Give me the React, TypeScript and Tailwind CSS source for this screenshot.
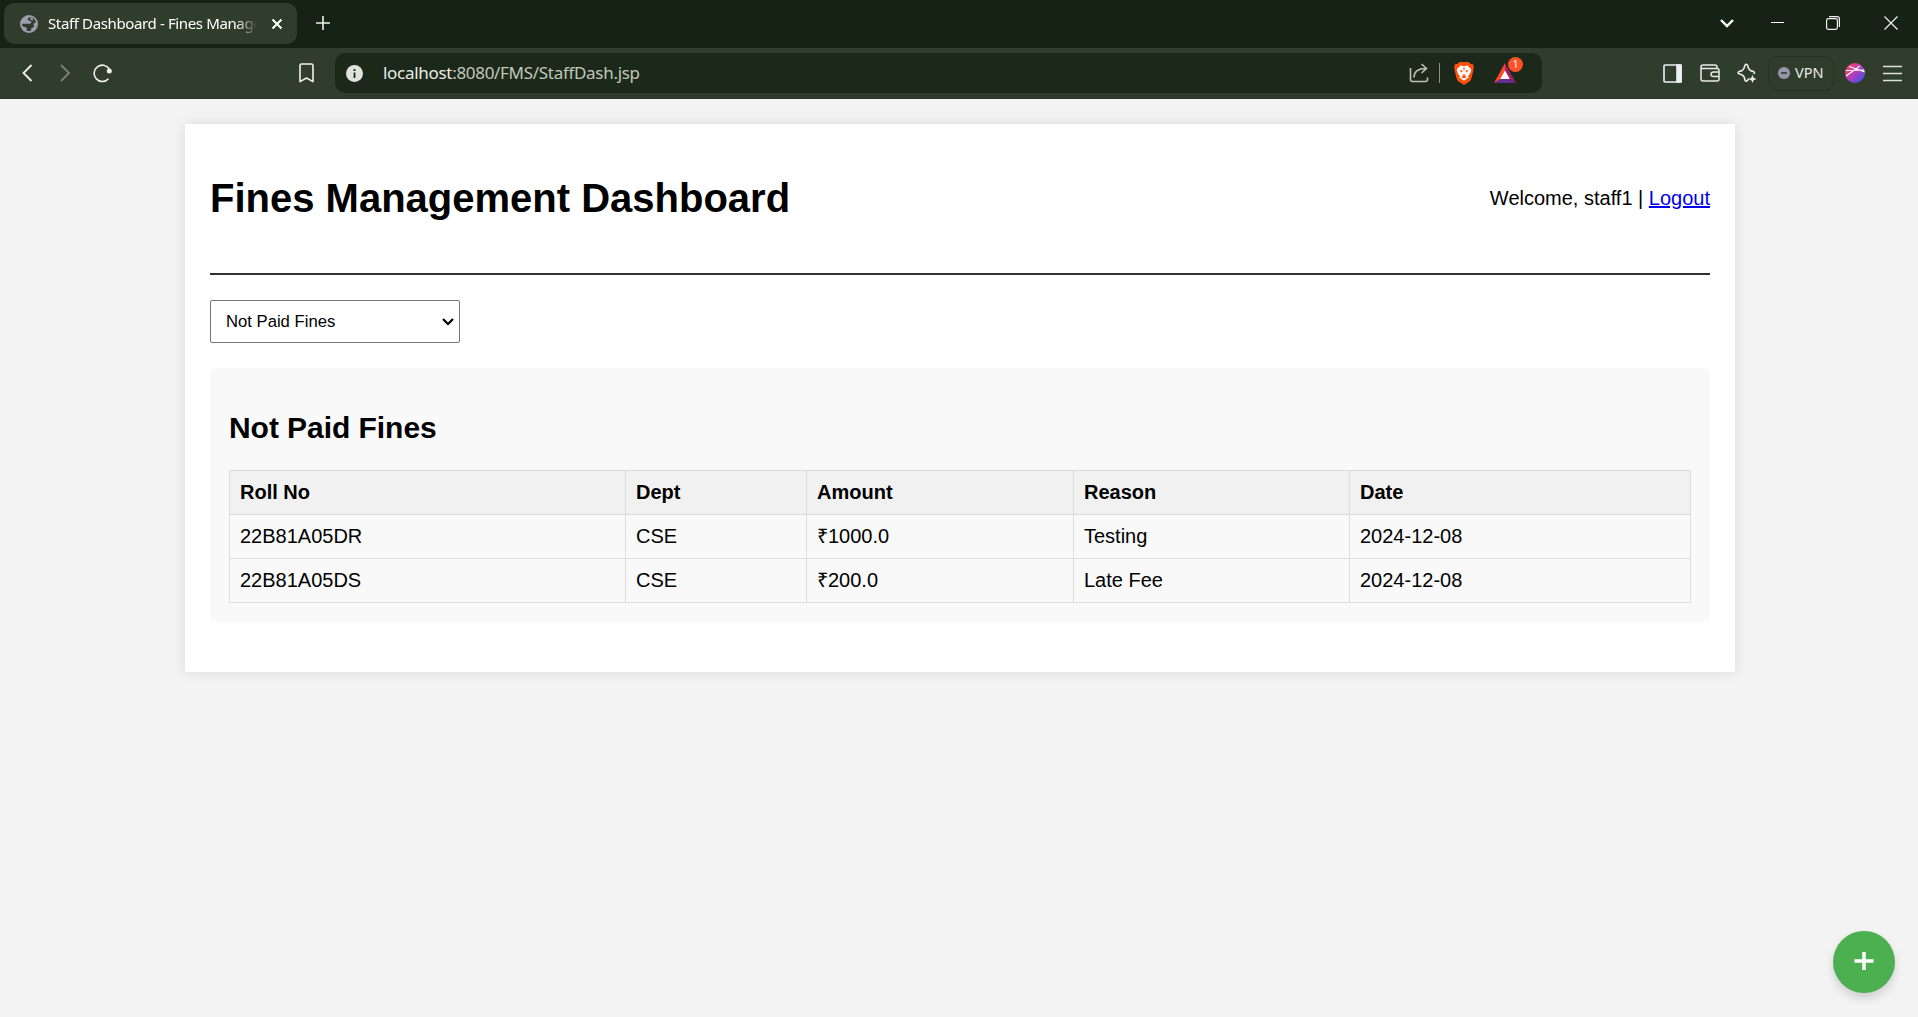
import React from "react";

const fines = [
  { roll: "22B81A05DR", dept: "CSE", amount: "₹1000.0", reason: "Testing", date: "2024-12-08" },
  { roll: "22B81A05DS", dept: "CSE", amount: "₹200.0", reason: "Late Fee", date: "2024-12-08" },
];

function TabStrip() {
  return (
    <div className="flex h-12 items-center bg-[#162213] pl-1 text-white">
      <div className="mt-[-1px] flex h-[41px] w-[293px] items-center rounded-[10px] bg-[#303d2d] pl-4">
        <svg className="size-[18px] shrink-0" viewBox="0 0 18 18">
          <circle cx="9" cy="9" r="9" fill="#9a9fad" />
          <path d="M11.500 2.200Q8 2 7.600 4.200Q7.600 5.600 9.600 5.800Q11.600 6 11.200 7.800Q11 9 9 8.800H2Q2.200 12 4.800 12Q7 12 6.800 14L6.600 15.800Q9 16.500 11 15.500Q10.600 13 12.600 12.600Q15 12.200 13.600 10Q13 8 16 7.500Q15 3.500 11.500 2.200z" fill="#303d2d" />
          <path d="M10.500 2.600Q13.800 3 12.800 5.500Q11.200 5.800 10.500 4.500z" fill="#9a9fad" />
        </svg>
        <div className="ml-[10px] w-[209px] overflow-hidden whitespace-nowrap text-[15px] tracking-[-0.37px] [mask-image:linear-gradient(to_right,black_90%,transparent)]">
          Staff Dashboard - Fines Manage
        </div>
        <svg className="ml-[14px] size-[12px] shrink-0" viewBox="0 0 12 12" stroke="#fff" strokeWidth="2"><path d="M1.500 1.500l9 9M10.500 1.500l-9 9" /></svg>
      </div>
      <svg className="ml-[19px] mt-[-2px] size-[14px]" viewBox="0 0 14 14" stroke="#f0f2ef" strokeWidth="1.6"><path d="M7 0v14M0 7h14" /></svg>
      <svg className="ml-auto size-[14px]" viewBox="0 0 14 14" fill="none" stroke="#fff" strokeWidth="2.4"><path d="M1 3l6 6 6-6" /></svg>
      <svg className="ml-[37px] h-[14px] w-[13px]" viewBox="0 0 13 14" stroke="#fff"><path d="M0 5.500h13" /></svg>
      <svg className="ml-[42px] mt-[-2px] size-[14px]" viewBox="0 0 14 14" fill="none" stroke="#f0f2ef" strokeWidth="1.2"><rect x=".6" y="2.600" width="10.800" height="10.800" rx="1.800" /><path d="M3 .6h8a2.400 2.400 0 0 1 2.400 2.400v8" /></svg>
      <svg className="ml-[44px] mr-[20px] mt-[-2px] size-[14px]" viewBox="0 0 14 14" stroke="#f0f2ef" strokeWidth="1.2"><path d="M.5.5l13 13M13.500.5l-13 13" /></svg>
    </div>
  );
}

function BraveLion() {
  return (
    <svg className="ml-[14px] h-[23px] w-[20px]" viewBox="0 0 20 23">
      <path d="M5.500 0h9l2 2 2-.2L20 5l-.8 2 .3 1-2.300 9q-.5 1.800-2 2.800L10 23l-5.200-3.200q-1.500-1-2-2.800L.5 8l.3-1L0 5l1.500-3.200 2 .2z" fill="#fb4f0c" />
      <path d="M6.500 3.500l3.500.7 3.500-.7 3.800 4-1 3.500-2.300 3.200.6 1.300L10 18.800l-4.600-3.300.6-1.300L3.700 11l-1-3.500z" fill="#fff" />
      <path d="M5 7.800l3 .7.500 1.200-1 .8zM15 7.800l-3 .7-.5 1.200 1 .8zM9.200 5.500h1.600L10 10zM8 12.500h4l-1 1.200h-2zM7 14.800l3-1 3 1-3 1.800z" fill="#fb4f0c" />
    </svg>
  );
}

function Toolbar() {
  return (
    <div className="flex h-[51px] items-center border-b border-[#343235] bg-[#303d2d]">
      <svg className="ml-[22px] h-[18px] w-[11px]" viewBox="0 0 11 18" fill="none" stroke="#eef1ec" strokeWidth="1.8"><path d="M9.500 1L1.500 9l8 8" /></svg>
      <svg className="ml-[27px] h-[18px] w-[11px]" viewBox="0 0 11 18" fill="none" stroke="#788274" strokeWidth="1.8"><path d="M1 1l8 8-8 8" /></svg>
      <svg className="ml-[22px] mt-[-1px] size-[20px]" viewBox="0 0 20 20" fill="none" stroke="#eef1ec" strokeWidth="1.6"><path d="M15.500 15.700A8.200 8.200 0 1 1 16.300 6" /><circle cx="16.300" cy="8" r="2.500" fill="#eef1ec" stroke="none" /></svg>
      <svg className="ml-[186px] h-[20px] w-[15px]" viewBox="0 0 15 20" fill="none" stroke="#eef1ec" strokeWidth="1.6"><path d="M1 2.600Q1 1 2.600 1h9.800Q14 1 14 2.600V18.600L7.500 15 1 18.600z" strokeLinejoin="round" /></svg>
      <div className="ml-[21px] flex h-10 w-[1207px] items-center rounded-[10px] bg-[#1c291a]">
        <svg className="ml-[11px] size-[17px]" viewBox="0 0 17 17"><circle cx="8.500" cy="8.500" r="8.500" fill="#dfe3dc" /><path d="M8.500 4v2M8.500 7.500V13" stroke="#1c291a" strokeWidth="1.8" /></svg>
        <div className="ml-[20px] text-[17px] tracking-[-0.3px] text-[#c0c8bb]"><span className="text-[#e9ece6]">localhost</span>:8080/FMS/StaffDash.jsp</div>
        <svg className="ml-auto size-[20px]" viewBox="0 0 20 20" fill="none" stroke="#b9c1b5" strokeWidth="1.6"><path d="M1.500 5v11.500q0 2 2 2h13q2 0 2-2v-2" /><path d="M5 14.500c0-5.500 4-9 12-9M12.500 1l5 4.500-5 4.500" /></svg>
        <div className="ml-[10px] h-5 w-px bg-[#8a9486]" />
        <BraveLion />
        <div className="relative ml-[20px] mr-[26px] h-[20px] w-[22px]">
          <svg className="size-full" viewBox="0 0 22 20"><path d="M11 0L0 20l7-4 4-7z" fill="#ff4724" /><path d="M11 0l11 20-7-4-4-7z" fill="#9e1f63" /><path d="M0 20h22l-7-4H7z" fill="#662d91" /><path d="M11 7.500l4.800 8.500H6.200z" fill="#fff" /></svg>
          <div className="absolute -top-[6px] left-[14px] flex size-[15px] items-center justify-center rounded-full bg-[#ff5129] text-[10px] text-white">1</div>
        </div>
      </div>
      <svg className="ml-[121px] size-[19px]" viewBox="0 0 19 19" fill="none" stroke="#eceff3" strokeWidth="1.6"><rect x="1" y="1" width="17" height="17" rx="1" /><path d="M14 1h4v17h-4z" fill="#eceff3" /></svg>
      <svg className="ml-[18px] h-[18px] w-[20px]" viewBox="0 0 20 18" fill="none" stroke="#e8ebe5" strokeWidth="1.5"><path d="M17 4.500V3q0-2-2-2H3Q1 1 1 3v12q0 2 2 2h14q2 0 2-2V6.500q0-2-2-2H2Q1 4.200 1 3" /><path d="M19 8h-5.500q-2.500 0-2.500 2.300t2.500 2.300H19" /></svg>
      <svg className="ml-[17px] mt-[-1px] size-[20px]" viewBox="0 0 20 20" fill="none" stroke="#e8ebe5" strokeWidth="1.6">
        <path d="M12 15.500L10.500 17.500Q9.200 19 8 17.200Q7.500 13 5.500 12.200Q4.500 11.700 2 10.800Q0 9.700 2 8.600Q4.500 7.800 5.500 7.200Q7 6.200 8 2.200Q9.200.4 10.500 2.200Q11.500 6.200 13 7.200Q14 7.800 16.500 8.600Q18.500 9.700 16.500 10.800" />
        <path d="M15.500 12l1.200 2.800 2.800 1.200-2.800 1.200-1.200 2.800-1.200-2.800-2.800-1.200 2.800-1.200z" fill="#e8ebe5" stroke="none" />
      </svg>
      <div className="ml-[11px] flex h-[35px] w-[66px] items-center rounded-[10px] border border-[#283126] pl-[9px]">
        <svg className="size-[12px]" viewBox="0 0 12 12"><circle cx="6" cy="6" r="6" fill="#9297aa" /><path d="M3 6h6" stroke="#303d2d" strokeWidth="1.6" /></svg>
        <span className="ml-[5px] text-[14.5px] text-[#e8ebe5]">VPN</span>
      </div>
      <div className="ml-[11px] size-5 overflow-hidden rounded-full bg-[linear-gradient(135deg,#f4436a_15%,#b63bbd_50%,#3b57e0_90%)]">
        <svg viewBox="0 0 20 20" stroke="#fff" strokeWidth="1.2"><path d="M1 13L15 3M4 3.500l16 5.500M0 7.500l20-.5" /></svg>
      </div>
      <svg className="ml-[18px] mt-px h-[17px] w-[19px]" viewBox="0 0 19 17" stroke="#dde1da" strokeWidth="1.6"><path d="M0 1.500h19M0 8.500h19M0 15.500h19" /></svg>
    </div>
  );
}

export default function App() {
  return (
    <div className="relative flex h-[1017px] w-[1918px] flex-col overflow-hidden bg-[#f3f3f3] font-['Noto_Sans',sans-serif]">
      <TabStrip />
      <Toolbar />
      <main className="ml-[185px] mt-[25px] h-[548px] w-[1550px] bg-white p-[25px] font-['Liberation_Sans',Arial,sans-serif] text-[20px] leading-[23px] text-black shadow-[0_0_12.5px_rgba(0,0,0,0.1)]">
        <header className="flex h-[126px] items-center justify-between border-b-2 border-[#333] pb-[25px]">
          <h1 className="text-[40px] font-bold leading-[45px]">Fines Management Dashboard</h1>
          <div>Welcome, staff1 | <a href="#" className="text-[#0000ee] underline">Logout</a></div>
        </header>
        <div className="mt-[25px] flex h-[43px] w-[250px] items-center justify-between rounded-[2px] border border-[#767676] pl-[15px] pr-[5px] text-[16.67px]">
          <span>Not Paid Fines</span>
          <svg className="size-[12px]" viewBox="0 0 12 12" fill="none" stroke="#000" strokeWidth="2.2"><path d="M1 3l5 5 5-5" /></svg>
        </div>
        <section className="mt-[25px] h-[254px] rounded-[6px] bg-[#f9f9f9] px-[19px] pt-[42px]">
          <h2 className="text-[30px] font-bold leading-[36px] tracking-[-0.05px]">Not Paid Fines</h2>
          <table className="mt-[24px] w-full table-fixed border-collapse text-left">
            <colgroup>
              <col className="w-[396px]" />
              <col className="w-[181px]" />
              <col className="w-[267px]" />
              <col className="w-[276px]" />
              <col />
            </colgroup>
            <thead>
              <tr className="h-[44px] bg-[#f1f1f1]">
                {["Roll No", "Dept", "Amount", "Reason", "Date"].map((h) => (
                  <th key={h} className="border border-[#ddd] px-[10px] font-bold">{h}</th>
                ))}
              </tr>
            </thead>
            <tbody>
              {fines.map((f) => (
                <tr key={f.roll} className="h-[44px]">
                  {[f.roll, f.dept, f.amount, f.reason, f.date].map((v, i) => (
                    <td key={i} className="border border-[#ddd] px-[10px]">{v}</td>
                  ))}
                </tr>
              ))}
            </tbody>
          </table>
        </section>
      </main>
      <button aria-label="Add fine" className="absolute bottom-[24px] right-[23px] flex size-[62px] items-center justify-center rounded-full bg-[#4caf50] shadow-[0_5px_10px_rgba(0,0,0,0.15)]">
        <svg className="mt-[-2px] size-[20px]" viewBox="0 0 20 20" stroke="#fff" strokeWidth="3.5"><path d="M10 1v18M.5 10h19" /></svg>
      </button>
    </div>
  );
}
